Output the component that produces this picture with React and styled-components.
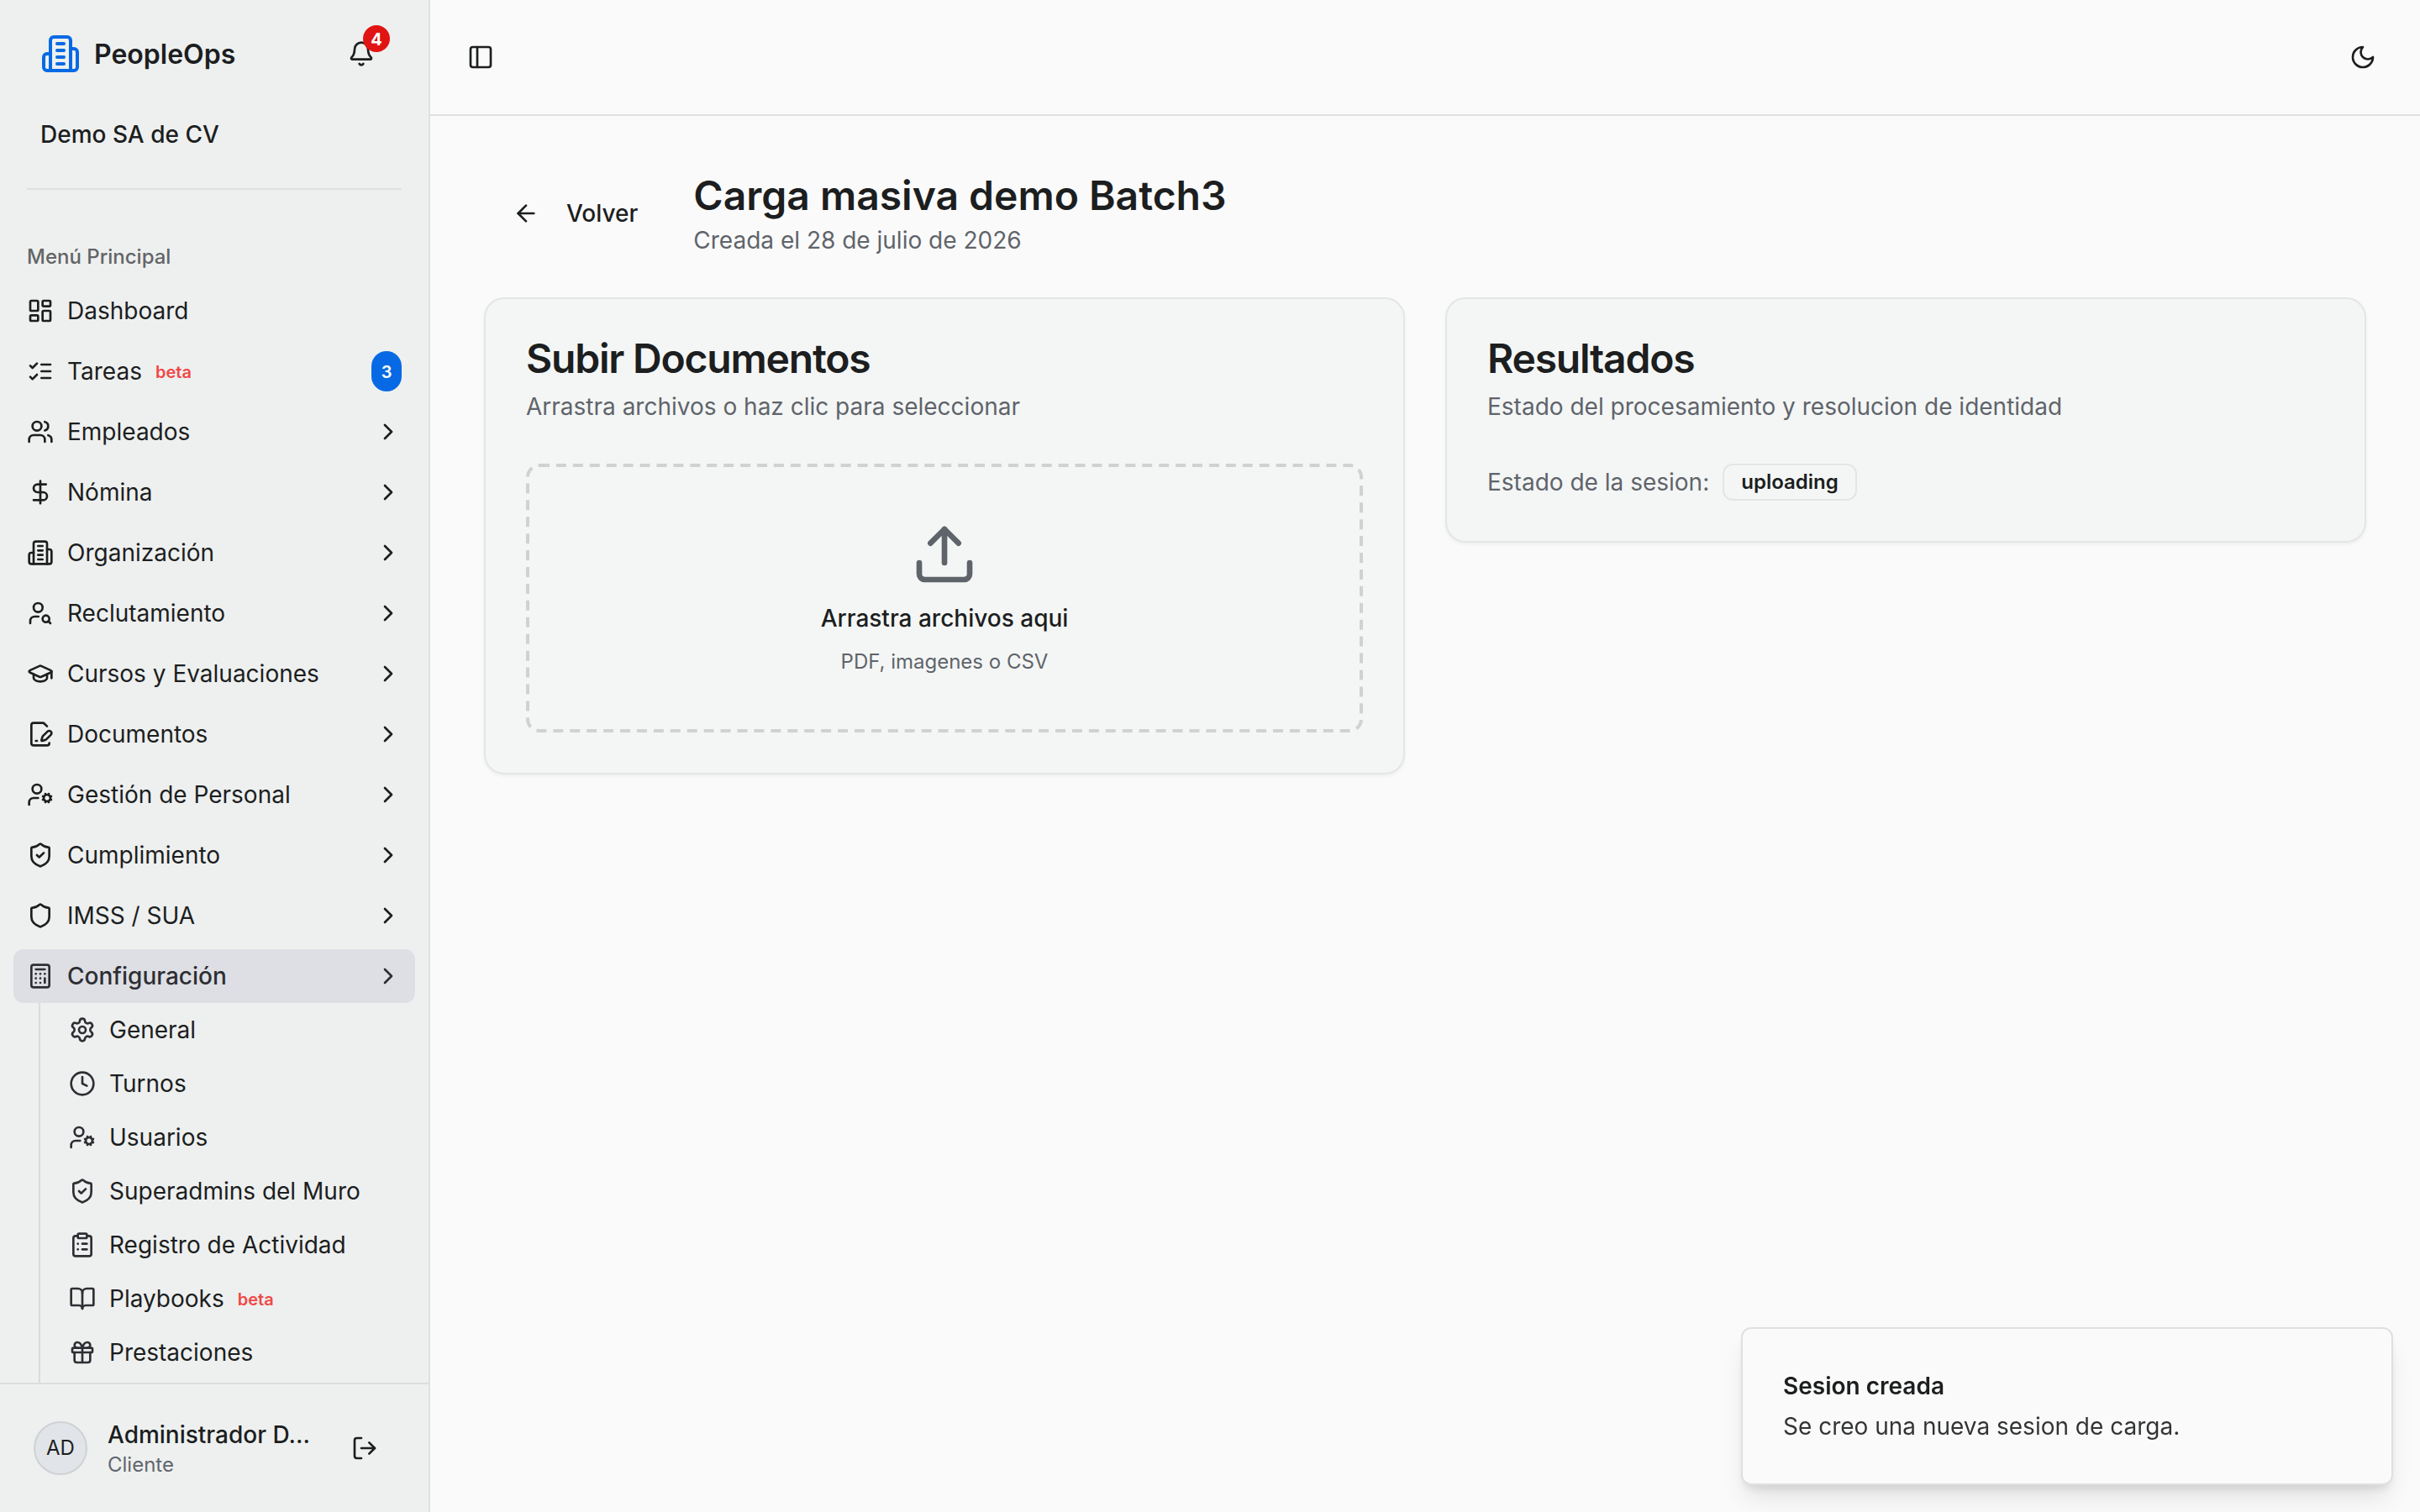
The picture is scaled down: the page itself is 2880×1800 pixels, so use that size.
import React from "react";
import styled, { createGlobalStyle, css } from "styled-components";
import {
  ArrowLeft, Bell, BookOpen, Calculator, ChevronRight, ClipboardList, Clock,
  DollarSign, GraduationCap, LayoutDashboard, LogOut, PanelLeft, Settings,
  Shield, ShieldCheck, Upload, UserCog, UserSearch, Users,
} from "lucide-react";

const GlobalStyle = createGlobalStyle`
  *, *::before, *::after { box-sizing: border-box; }
  html, body { margin: 0; padding: 0; }
  body {
    background: #fafafa;
    color: #1c1e1f;
    font-family: Inter, "Liberation Sans", sans-serif;
    font-size: 28px;
    line-height: 40px;
    -webkit-font-smoothing: antialiased;
  }
  button { font: inherit; color: inherit; }
  h1, h2, p { margin: 0; }
  svg { flex-shrink: 0; display: block; }
`;

const Stroke = ({ size = 32, children }) => (
  <svg width={size} height={size} viewBox="0 0 24 24" fill="none" stroke="currentColor"
    strokeWidth="2" strokeLinecap="round" strokeLinejoin="round">
    {children}
  </svg>
);

const BuildingIcon = ({ size }) => (
  <Stroke size={size}>
    <path d="M6 22V4a2 2 0 0 1 2-2h8a2 2 0 0 1 2 2v18Z" />
    <path d="M6 12H4a2 2 0 0 0-2 2v6a2 2 0 0 0 2 2h2" />
    <path d="M18 9h2a2 2 0 0 1 2 2v9a2 2 0 0 1-2 2h-2" />
    <path d="M10 6h4" /><path d="M10 10h4" /><path d="M10 14h4" /><path d="M10 18h4" />
  </Stroke>
);

const ChecksIcon = ({ size }) => (
  <Stroke size={size}>
    <path d="m3 17 2 2 4-4" /><path d="m3 7 2 2 4-4" />
    <path d="M13 6h8" /><path d="M13 12h8" /><path d="M13 18h8" />
  </Stroke>
);

const FileSignIcon = ({ size }) => (
  <Stroke size={size}>
    <path d="m18 5-2.414-2.414A2 2 0 0 0 14.172 2H6a2 2 0 0 0-2 2v16a2 2 0 0 0 2 2h12a2 2 0 0 0 2-2" />
    <path d="M21.378 12.626a1 1 0 0 0-3.004-3.004l-4.01 4.012a2 2 0 0 0-.506.854l-.837 2.87a.5.5 0 0 0 .62.62l2.87-.837a2 2 0 0 0 .854-.506z" />
    <path d="M8 18h1" />
  </Stroke>
);

const GiftIcon = ({ size }) => (
  <Stroke size={size}>
    <rect x="3" y="8" width="18" height="4" rx="1" />
    <path d="M12 8v13" />
    <path d="M19 12v7a2 2 0 0 1-2 2H7a2 2 0 0 1-2-2v-7" />
    <path d="M7.5 8a2.5 2.5 0 0 1 0-5A4.8 8 0 0 1 12 8a4.8 8 0 0 1 4.5-5 2.5 2.5 0 0 1 0 5" />
  </Stroke>
);

const MoonIcon = ({ size }) => (
  <Stroke size={size}>
    <path d="M12 3a6 6 0 0 0 9 9 9 9 0 1 1-9-9Z" />
  </Stroke>
);

const Shell = styled.div`
  display: flex;
  height: 1800px;
  width: 2880px;
  overflow: hidden;
`;

const Sidebar = styled.aside`
  width: 512px;
  flex-shrink: 0;
  display: flex;
  flex-direction: column;
  background: #eef0ef;
  border-right: 2px solid #dfe1e1;
`;

const BrandRow = styled.div`
  display: flex;
  align-items: center;
  justify-content: space-between;
  padding: 32px 48px 0;
`;

const Brand = styled.div`
  display: flex;
  align-items: center;
  gap: 16px;
  svg { color: #076ae4; }
`;

const BrandName = styled.span`
  padding-top: 1px;
  font-size: 32px;
  font-weight: 600;
  line-height: 39px;
`;

const IconButton = styled.button`
  position: relative;
  display: flex;
  align-items: center;
  justify-content: center;
  width: 64px;
  height: 64px;
  padding: 0;
  border: 0;
  background: none;
`;

const CountDot = styled.span`
  position: absolute;
  top: -2px;
  right: -2px;
  width: 32px;
  height: 32px;
  border-radius: 50%;
  background: #e11414;
  color: #fff;
  font-size: 20px;
  font-weight: 700;
  line-height: 34px;
  text-align: center;
`;

const Company = styled.div`
  padding: 44px 48px 0;
  font-weight: 500;
`;

const Divider = styled.div`
  height: 2px;
  margin: 44px 32px 0;
  background: #dfe1e1;
`;

const GroupLabel = styled.div`
  height: 64px;
  margin-top: 48px;
  padding: 0 32px;
  line-height: 63px;
  font-size: 24px;
  font-weight: 500;
  color: #636566;
`;

const Nav = styled.nav`
  flex: 1;
  min-height: 0;
  overflow: hidden;
  display: flex;
  flex-direction: column;
  gap: 8px;
  padding: 0 16px;
`;

const NavItem = styled.a`
  display: flex;
  align-items: center;
  gap: 16px;
  height: 64px;
  flex-shrink: 0;
  padding: 0 16px;
  border-radius: 12px;
  ${({ $active }) => $active && css`
    background: #dedfe4;
    color: #2d2f34;
    font-weight: 500;
  `}
`;

const NavLabel = styled.span`
  flex: 1;
  display: flex;
  align-items: center;
  gap: 16px;
  white-space: nowrap;
`;

const Beta = styled.span`
  padding-top: 2px;
  font-size: 20px;
  font-weight: 600;
  line-height: 38px;
  color: #f04848;
`;

const CountPill = styled.span`
  min-width: 36px;
  height: 48px;
  border-radius: 18px;
  background: #076ae4;
  color: #fff;
  font-size: 20px;
  font-weight: 600;
  line-height: 50px;
  text-align: center;
`;

const SubNav = styled.div`
  margin: -8px 0 0 30px;
  padding-left: 18px;
  border-left: 2px solid #d9dbdb;
  flex: 1 0 auto;
`;

const SubItem = styled(NavItem)`
  svg { color: #2d2f34; }
`;

const UserBar = styled.footer`
  display: flex;
  align-items: center;
  height: 154px;
  flex-shrink: 0;
  padding: 0 44px 0 40px;
  border-top: 2px solid #dbdede;
`;

const Avatar = styled.div`
  width: 64px;
  height: 64px;
  flex-shrink: 0;
  border: 2px solid #cfd1d4;
  border-radius: 50%;
  background: #e1e4e8;
  font-size: 24px;
  line-height: 59px;
  text-align: center;
`;

const UserText = styled.div`
  flex: 1;
  min-width: 0;
  padding-left: 24px;
`;

const UserName = styled.div`
  white-space: nowrap;
  font-weight: 500;
`;

const UserRole = styled.div`
  padding-bottom: 1px;
  font-size: 24px;
  line-height: 31px;
  color: #61666d;
`;

const Main = styled.div`
  flex: 1;
  min-width: 0;
  display: flex;
  flex-direction: column;
`;

const TopBar = styled.header`
  display: flex;
  align-items: center;
  justify-content: space-between;
  height: 138px;
  padding: 0 36px 0 28px;
  border-bottom: 2px solid #dfe0e0;
`;

const Content = styled.main`
  display: flex;
  flex-direction: column;
  gap: 48px;
  padding: 64px;
`;

const PageHead = styled.div`
  display: flex;
  align-items: center;
  gap: 32px;
`;

const BackButton = styled.button`
  display: flex;
  align-items: center;
  gap: 32px;
  height: 72px;
  padding: 0 32px;
  border: 2px solid transparent;
  background: none;
  font-weight: 500;
`;

const PageTitle = styled.h1`
  padding-bottom: 3px;
  font-size: 48px;
  font-weight: 600;
  line-height: 61px;
`;

const Muted = styled.p`
  color: #5f646b;
`;

const Columns = styled.div`
  display: grid;
  grid-template-columns: 1fr 1fr;
  align-items: start;
  gap: 48px;
`;

const Card = styled.section`
  padding: 48px;
  border: 2px solid #e4e6e5;
  border-radius: 24px;
  background: #f4f6f5;
  box-shadow: 0 2px 4px rgba(0, 0, 0, 0.05);
`;

const CardHead = styled.div`
  display: flex;
  flex-direction: column;
  gap: 12px;
  margin-bottom: 48px;
`;

const CardTitle = styled.h2`
  padding-bottom: 3px;
  font-size: 48px;
  font-weight: 600;
  line-height: 45px;
  letter-spacing: -0.025em;
`;

/* The outline is drawn at half size and scaled up, for longer dashes. */
const DropZone = styled.div`
  position: relative;
  display: flex;
  flex-direction: column;
  align-items: center;
  gap: 16px;
  padding: 68px;
  svg { color: #5f646b; }
  &::before {
    content: "";
    position: absolute;
    top: 0;
    left: 0;
    width: 50%;
    height: 50%;
    border: 2px dashed #d0d2d2;
    border-radius: 8px;
    transform: scale(2);
    transform-origin: 0 0;
  }
`;

const DropTitle = styled.p`
  font-weight: 500;
`;

const DropHint = styled.p`
  padding-bottom: 1px;
  font-size: 24px;
  line-height: 31px;
  color: #5f646b;
`;

const StatusRow = styled.div`
  display: flex;
  align-items: center;
  gap: 16px;
`;

const StatusBadge = styled.span`
  height: 44px;
  padding: 0 20px;
  border: 2px solid #e4e6e5;
  border-radius: 12px;
  font-size: 24px;
  font-weight: 600;
  line-height: 39px;
`;

const Toast = styled.div`
  position: fixed;
  right: 32px;
  bottom: 32px;
  width: 776px;
  display: flex;
  flex-direction: column;
  gap: 8px;
  padding: 48px;
  border: 2px solid #dfe0e0;
  border-radius: 12px;
  background: #fafafa;
  box-shadow: 0 20px 30px -6px rgba(0, 0, 0, 0.1), 0 8px 12px -4px rgba(0, 0, 0, 0.1);
`;

const ToastTitle = styled.div`
  font-weight: 600;
`;

const ToastText = styled.div`
  opacity: 0.9;
`;

const menu = [
  { label: "Dashboard", icon: LayoutDashboard },
  { label: "Tareas", icon: ChecksIcon, beta: true, count: 3 },
  { label: "Empleados", icon: Users, nested: true },
  { label: "Nómina", icon: DollarSign, nested: true },
  { label: "Organización", icon: BuildingIcon, nested: true },
  { label: "Reclutamiento", icon: UserSearch, nested: true },
  { label: "Cursos y Evaluaciones", icon: GraduationCap, nested: true },
  { label: "Documentos", icon: FileSignIcon, nested: true },
  { label: "Gestión de Personal", icon: UserCog, nested: true },
  { label: "Cumplimiento", icon: ShieldCheck, nested: true },
  { label: "IMSS / SUA", icon: Shield, nested: true },
  { label: "Configuración", icon: Calculator, nested: true, active: true },
];

const settingsMenu = [
  { label: "General", icon: Settings },
  { label: "Turnos", icon: Clock },
  { label: "Usuarios", icon: UserCog },
  { label: "Superadmins del Muro", icon: ShieldCheck },
  { label: "Registro de Actividad", icon: ClipboardList },
  { label: "Playbooks", icon: BookOpen, beta: true },
  { label: "Prestaciones", icon: GiftIcon },
];

export default function App() {
  return (
    <>
      <GlobalStyle />
      <Shell>
        <Sidebar>
          <BrandRow>
            <Brand>
              <BuildingIcon size={48} />
              <BrandName>PeopleOps</BrandName>
            </Brand>
            <IconButton aria-label="Notificaciones">
              <Bell size={32} />
              <CountDot>4</CountDot>
            </IconButton>
          </BrandRow>
          <Company>Demo SA de CV</Company>
          <Divider />
          <GroupLabel>Menú Principal</GroupLabel>
          <Nav>
            {menu.map(({ label, icon: Icon, beta, count, nested, active }) => (
              <NavItem key={label} $active={active}>
                <Icon size={32} />
                <NavLabel>{label}{beta && <Beta>beta</Beta>}</NavLabel>
                {count && <CountPill>{count}</CountPill>}
                {nested && <ChevronRight size={32} />}
              </NavItem>
            ))}
            <SubNav>
              {settingsMenu.map(({ label, icon: Icon, beta }) => (
                <SubItem key={label}>
                  <Icon size={32} />
                  <NavLabel>{label}{beta && <Beta>beta</Beta>}</NavLabel>
                </SubItem>
              ))}
            </SubNav>
          </Nav>
          <UserBar>
            <Avatar>AD</Avatar>
            <UserText>
              <UserName>Administrador D…</UserName>
              <UserRole>Cliente</UserRole>
            </UserText>
            <IconButton aria-label="Cerrar sesión"><LogOut size={32} /></IconButton>
          </UserBar>
        </Sidebar>
        <Main>
          <TopBar>
            <IconButton aria-label="Menú"><PanelLeft size={32} /></IconButton>
            <IconButton aria-label="Tema"><MoonIcon size={32} /></IconButton>
          </TopBar>
          <Content>
            <PageHead>
              <BackButton><ArrowLeft size={32} />Volver</BackButton>
              <div>
                <PageTitle>Carga masiva demo Batch3</PageTitle>
                <Muted>Creada el 28 de julio de 2026</Muted>
              </div>
            </PageHead>
            <Columns>
              <Card>
                <CardHead>
                  <CardTitle>Subir Documentos</CardTitle>
                  <Muted>Arrastra archivos o haz clic para seleccionar</Muted>
                </CardHead>
                <DropZone>
                  <Upload size={80} />
                  <DropTitle>Arrastra archivos aqui</DropTitle>
                  <DropHint>PDF, imagenes o CSV</DropHint>
                </DropZone>
              </Card>
              <Card>
                <CardHead>
                  <CardTitle>Resultados</CardTitle>
                  <Muted>Estado del procesamiento y resolucion de identidad</Muted>
                </CardHead>
                <StatusRow>
                  <Muted>Estado de la sesion:</Muted>
                  <StatusBadge>uploading</StatusBadge>
                </StatusRow>
              </Card>
            </Columns>
          </Content>
        </Main>
      </Shell>
      <Toast>
        <ToastTitle>Sesion creada</ToastTitle>
        <ToastText>Se creo una nueva sesion de carga.</ToastText>
      </Toast>
    </>
  );
}
